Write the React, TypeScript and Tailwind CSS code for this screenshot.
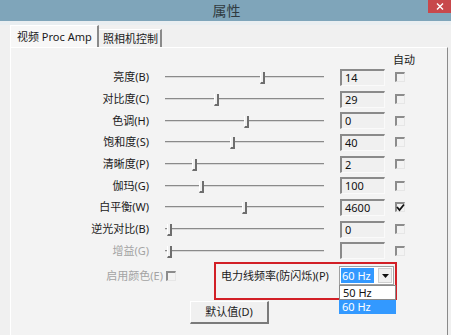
import React from "react";

const rows = [
  { label: "亮度(B)", thumb: 97, value: "14", checked: false, disabled: false, h: 22 },
  { label: "对比度(C)", thumb: 51, value: "29", checked: false, disabled: false, h: 22 },
  { label: "色调(H)", thumb: 81, value: "0", checked: false, disabled: false, h: 21 },
  { label: "饱和度(S)", thumb: 67, value: "40", checked: false, disabled: false, h: 22 },
  { label: "清晰度(P)", thumb: 29, value: "2", checked: false, disabled: false, h: 22 },
  { label: "伽玛(G)", thumb: 36, value: "100", checked: false, disabled: false, h: 21 },
  { label: "白平衡(W)", thumb: 79, value: "4600", checked: true, disabled: false, h: 22 },
  { label: "逆光对比(B)", thumb: 4, value: "0", checked: false, disabled: false, h: 22 },
  { label: "增益(G)", thumb: 4, value: "", checked: false, disabled: true, h: 21 },
];

function Checkbox({ checked }: { checked?: boolean }) {
  return (
    <div className="relative w-[10px] h-[10px] border-t-2 border-l-2 border-t-[#8c8c8c] border-l-[#8c8c8c] border-r border-b border-r-[#e6e6e6] border-b-[#e6e6e6] bg-[#f3f3f3]">
      {checked && (
        <svg className="absolute -left-[1px] -top-[1px]" width="9" height="9" viewBox="0 0 9 9">
          <path d="M1 4 L3.5 7 L8 1.5" stroke="#111" strokeWidth="1.8" fill="none" />
        </svg>
      )}
    </div>
  );
}

function Slider({ thumb }: { thumb: number }) {
  return (
    <div className="relative w-[159px] h-[22px]">
      <div className="absolute left-0 right-0 top-[10px] h-[2px] bg-[#8a8a8a] border-b border-b-[#d8d8d8]" />
      <div
        className="absolute top-[6px] w-[5px] h-[12px] bg-[#f0f0f0] border-l border-l-white border-r-2 border-r-[#6e6e6e] border-b-2 border-b-[#6e6e6e]"
        style={{ left: thumb - 2 }}
      />
    </div>
  );
}

function TextBox({ value }: { value: string }) {
  return (
    <div className="w-[45px] h-[17px] border-t-2 border-l-2 border-t-[#8a8a8a] border-l-[#8a8a8a] border-r border-b border-r-[#fafafa] border-b-[#fafafa] bg-[#f0f0f0] pl-[3px] text-[11px] leading-[14px] text-[#111]">
      {value}
    </div>
  );
}

export default function App() {
  return (
    <div
      className="w-[451px] h-[335px] overflow-hidden bg-[#f0f0f0] text-[#1a1a1a]"
      style={{ fontFamily: '"Noto Sans", "Noto Sans CJK SC", sans-serif' }}
    >
      {/* Title bar */}
      <div className="h-[21px] bg-[#7fa5ba] flex items-start">
        <div className="flex-1" />
        <div className="pl-[2px] pt-[2px] text-[14px] leading-[17px] text-[#2f3a40]">属性</div>
        <div className="flex-1 flex justify-end">
          <div className="w-[23px] h-[13px] bg-[#c8484b] flex items-center justify-center">
            <svg width="8" height="7" viewBox="0 0 8 7">
              <path d="M1 0.5 L7 6.5 M7 0.5 L1 6.5" stroke="#fff" strokeWidth="1.4" />
            </svg>
          </div>
        </div>
      </div>
      <div className="h-[4px] bg-[#e9eef1]" />

      {/* Tabs */}
      <div className="h-[22px] pl-[10px] flex items-end">
        <div className="h-[22px] w-[89px] bg-[#f7f7f7] border-t border-l border-t-white border-l-white border-r-2 border-r-[#8a8a8a] flex items-start pl-[6px] pt-[4px] text-[11px] leading-[14px]">
          视频 Proc Amp
        </div>
        <div className="h-[18px] w-[63px] border-t border-t-white border-r-2 border-r-[#8a8a8a] flex items-start pl-[4px] pt-[2px] text-[11px] leading-[14px]">
          照相机控制
        </div>
      </div>

      {/* Tab page */}
      <div className="ml-[10px] mr-[3px] h-[300px] bg-[#f3f3f3] border-l border-l-white border-t border-t-white border-r border-r-[#8a8a8a] flex flex-col">
        <div className="h-[18px] flex items-end">
          <div className="ml-[382px] text-[11px] leading-[14px] translate-y-[1px]">自动</div>
        </div>

        {rows.map((r) => (
          <div key={r.label} className="flex items-center" style={{ height: r.h }}>
            <div
              className={`w-[138px] text-right text-[11px] leading-[14px] ${r.disabled ? "text-[#a3a3a3]" : "text-[#1a1a1a]"}`}
            >
              {r.label}
            </div>
            <div className="ml-[16px]">
              <Slider thumb={r.thumb} />
            </div>
            <div className="ml-[16px]">
              <TextBox value={r.value} />
            </div>
            <div className="ml-[10px]">
              <Checkbox checked={r.checked} />
            </div>
          </div>
        ))}

        {/* Color enable + power line frequency */}
        <div className="h-[38px] flex items-start mt-[1px]">
          <div className="w-[203px] flex items-center pt-[7px]">
            <div className="w-[152px] text-right text-[11px] leading-[14px] text-[#a3a3a3]">启用颜色(E)</div>
            <div className="ml-[3px]">
              <Checkbox />
            </div>
          </div>
          <div className="relative w-[183px] h-[38px] border-2 border-[#d21f26] flex items-start">
            <div className="pl-[5px] pt-[5px] text-[11px] leading-[14px] w-[123px]">电力线频率(防闪烁)(P)</div>
            <div className="relative mt-[2px] w-[55px] h-[19px] bg-white border border-[#a0a0a0] flex items-center">
              <div className="ml-[1px] h-[15px] w-[33px] bg-[#3399ff] text-white text-[11px] leading-[15px] pl-[1px]">60 Hz</div>
              <div className="ml-auto mr-[1px] w-[14px] h-[15px] bg-[#f0f0f0] border border-[#cfcfcf] flex items-center justify-center">
                <svg width="7" height="4" viewBox="0 0 7 4">
                  <path d="M0 0 H7 L3.5 4 Z" fill="#111" />
                </svg>
              </div>
              <div className="absolute left-[-1px] top-[18px] w-[57px] flex flex-col z-10">
                <div className="h-[15px] bg-white border border-[#8a8a8a] text-[11px] leading-[13px] pl-[3px] text-[#111]">50 Hz</div>
                <div className="h-[14px] bg-[#3399ff] text-[11px] leading-[14px] pl-[3px] text-white">60 Hz</div>
              </div>
            </div>
          </div>
        </div>

        <div className="flex mt-[1px]">
          <div className="ml-[179px] w-[79px] h-[23px] bg-[#f0f0f0] border-t border-l border-t-white border-l-white border-r-2 border-b-2 border-r-[#7a7a7a] border-b-[#7a7a7a] flex items-center justify-center text-[11px] leading-[14px]">
            默认值(D)
          </div>
        </div>
      </div>
    </div>
  );
}
